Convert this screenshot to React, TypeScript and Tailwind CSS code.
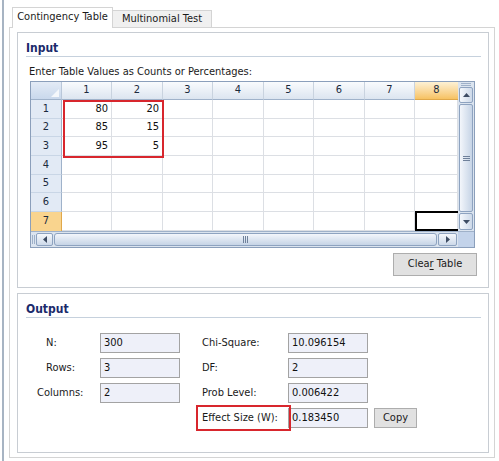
import React from "react";

const COLS = [50, 51, 50, 51, 50, 51, 50, 43];
const ROWS = [19, 18, 19, 19, 18, 19, 19];
const DATA: Record<string, string> = {
  "0-0": "80",
  "0-1": "20",
  "1-0": "85",
  "1-1": "15",
  "2-0": "95",
  "2-1": "5",
};

function Arrow({ dir }: { dir: "up" | "down" | "left" | "right" }) {
  const d = {
    up: "M0 4L3.5 0L7 4Z",
    down: "M0 0L7 0L3.5 4Z",
    left: "M4 0L4 7L0 3.5Z",
    right: "M0 0L4 3.5L0 7Z",
  }[dir];
  const vertical = dir === "up" || dir === "down";
  return (
    <svg width={vertical ? 7 : 4} height={vertical ? 4 : 7} viewBox={vertical ? "0 0 7 4" : "0 0 4 7"}>
      <path d={d} fill="#3d4c63" />
    </svg>
  );
}

function VScroll() {
  return (
    <div className="flex w-[16px] flex-col bg-[#dbe4ef] px-[1px]">
      <div className="mx-[2px] mt-[1px] h-[3px] border-y border-[#9fb1c9]" />
      <div className="mt-[1px] flex h-[16px] items-center justify-center rounded-[2px] border border-[#8ea3c0] bg-linear-to-r from-[#f5f8fc] to-[#cdd9e9]">
        <Arrow dir="up" />
      </div>
      <div className="my-[1px] flex flex-1 items-center justify-center rounded-[2px] border border-[#8ea3c0] bg-linear-to-r from-[#f3f6fb] to-[#c6d4e6]">
        <div className="flex w-[7px] flex-col gap-[1px]">
          <div className="h-px bg-[#6f819b]" />
          <div className="h-px bg-[#6f819b]" />
          <div className="h-px bg-[#6f819b]" />
        </div>
      </div>
      <div className="mb-[1px] flex h-[17px] items-center justify-center rounded-[2px] border border-[#8ea3c0] bg-linear-to-r from-[#f5f8fc] to-[#cdd9e9]">
        <Arrow dir="down" />
      </div>
    </div>
  );
}

function HScroll() {
  return (
    <div className="flex h-[15px] w-[427px] items-stretch bg-[#dbe4ef] py-[1px]">
      <div className="my-[2px] ml-[1px] w-[3px] border-x border-[#9fb1c9]" />
      <div className="ml-[1px] flex w-[17px] items-center justify-center rounded-[2px] border border-[#8ea3c0] bg-linear-to-b from-[#f5f8fc] to-[#cdd9e9]">
        <Arrow dir="left" />
      </div>
      <div className="mx-[1px] flex flex-1 items-center justify-center rounded-[3px] border border-[#8ea3c0] bg-linear-to-b from-[#f3f6fb] to-[#c6d4e6]">
        <div className="flex h-[7px] gap-[1px]">
          <div className="w-px bg-[#6f819b]" />
          <div className="w-px bg-[#6f819b]" />
          <div className="w-px bg-[#6f819b]" />
        </div>
      </div>
      <div className="mr-[1px] flex w-[19px] items-center justify-center rounded-[2px] border border-[#8ea3c0] bg-linear-to-b from-[#f5f8fc] to-[#cdd9e9]">
        <Arrow dir="right" />
      </div>
    </div>
  );
}

function Grid() {
  return (
    <div className="ml-[12px] mt-[2px] w-[445px] border border-[#8b9fbb]">
      <div className="flex">
        <div className="relative w-[427px]">
          <div className="flex h-[18px]">
            <div className="relative w-[31px] border-r border-b border-r-[#b9c7d9] border-b-[#9fb2ca] bg-linear-to-b from-[#e3ebf6] to-[#c9d8ec]">
              <svg className="absolute bottom-[2px] right-[2px]" width="8" height="8" viewBox="0 0 8 8">
                <path d="M8 0L8 8L0 8Z" fill="#f4f7fb" />
              </svg>
            </div>
            {COLS.map((w, i) => (
              <div
                key={i}
                style={{ width: w }}
                className={
                  i === 7
                    ? "flex items-center justify-center border-b border-b-[#e0a84a] bg-linear-to-b from-[#fdf1d4] to-[#f6c261] text-[#1b2a3d]"
                    : "flex items-center justify-center border-r border-b border-r-[#c9d3df] border-b-[#9fb2ca] bg-linear-to-b from-[#f9fbfd] to-[#dce5f0] text-[#1b2a3d]"
                }
              >
                {i + 1}
              </div>
            ))}
          </div>
          {ROWS.map((h, r) => (
            <div key={r} className="flex" style={{ height: h }}>
              <div
                className={
                  r === 6
                    ? "flex w-[31px] items-center justify-center border-r border-r-[#e0a84a] bg-[#f9d48e] text-[#1b2a3d]"
                    : "flex w-[31px] items-center justify-center border-r border-b border-r-[#9fb2ca] border-b-[#c9d6e6] bg-[#e2eaf5] text-[#1b2a3d]"
                }
              >
                {r + 1}
              </div>
              {COLS.map((w, c) => (
                <div
                  key={c}
                  style={{ width: w }}
                  className="flex items-center justify-end border-r border-b border-[#dcdfe4] bg-white pr-[3px] text-[#111]"
                >
                  {DATA[`${r}-${c}`]}
                </div>
              ))}
            </div>
          ))}
          <div className="absolute left-[32px] top-[18px] h-[58px] w-[101px] border-2 border-[#d8262d]" />
          <div className="absolute left-[384px] top-[129px] h-[20px] w-[43px] border-2 border-r-0 border-black" />
        </div>
        <VScroll />
      </div>
      <div className="flex border-t border-[#9fb1c9]">
        <HScroll />
        <div className="w-[16px] bg-[#c3d3ea]" />
      </div>
    </div>
  );
}

function Field({ value }: { value: string }) {
  return (
    <div className="flex h-[20px] w-[80px] items-center border border-[#a3a3a3] bg-[#eef0f9] pl-[3px] text-[#111]">
      {value}
    </div>
  );
}

function GroupTitle({ children }: { children: React.ReactNode }) {
  return (
    <div className="ml-[8px] mr-[7px] border-b border-[#c6d1dd] pt-[8px]">
      <div className="text-[12px] font-bold leading-[15px] text-[#1b2a6b]">{children}</div>
    </div>
  );
}

export default function App() {
  return (
    <div className="h-[461px] w-[499px] overflow-hidden bg-white font-['DejaVu_Sans_Condensed','DejaVu_Sans',sans-serif] text-[11px] text-[#1a1a1a]">
      <div className="flex h-full">
        <div className="ml-[2px] w-[2px] bg-[#a7b4c3]" />
        <div className="ml-[5px] flex flex-col pt-[7px]">
          <div className="flex h-[21px] items-start pl-[3px]">
            <div className="relative z-10 flex h-[21px] w-[101px] items-start justify-center border border-b-0 border-[#d4d4d4] bg-white pt-[2px] leading-[14px]">
              Contingency Table
            </div>
            <div className="mt-[3px] flex h-[17px] w-[99px] items-start justify-center border border-l-0 border-b-0 border-[#d4d4d4] bg-[#f0f0f0] pt-[1px] leading-[14px]">
              Multinomial Test
            </div>
          </div>
          <div className="-mt-px h-[431px] w-[486px] border border-[#d4d4d4] bg-white pl-[7px] pt-[4px]">
            <div className="flex h-[256px] w-[472px] flex-col border border-[#c8cdd3]">
              <GroupTitle>Input</GroupTitle>
              <div className="ml-[11px] mt-[8px] leading-[14px]">Enter Table Values as Counts or Percentages:</div>
              <Grid />
              <div className="mr-[11px] mt-[5px] flex justify-end">
                <button className="flex h-[23px] w-[84px] items-center justify-center border border-[#adadad] bg-[#e1e1e1] text-[#1a1a1a]">
                  Clea<span className="underline underline-offset-2">r</span>&nbsp;Table
                </button>
              </div>
            </div>
            <div className="mt-[5px] flex h-[160px] w-[472px] flex-col border border-[#c8cdd3]">
              <GroupTitle>Output</GroupTitle>
              <div className="ml-[19px] mt-[15px] flex">
                <div className="flex flex-col gap-[5px]">
                  <div className="flex items-center">
                    <span className="w-[63px] pl-[9px]">N:</span>
                    <Field value="300" />
                  </div>
                  <div className="flex items-center">
                    <span className="w-[63px] pl-[9px]">Rows:</span>
                    <Field value="3" />
                  </div>
                  <div className="flex items-center">
                    <span className="w-[63px]">Columns:</span>
                    <Field value="2" />
                  </div>
                </div>
                <div className="ml-[22px] flex flex-col gap-[5px]">
                  <div className="flex items-center">
                    <span className="w-[86px]">Chi-Square:</span>
                    <Field value="10.096154" />
                  </div>
                  <div className="flex items-center">
                    <span className="w-[86px]">DF:</span>
                    <Field value="2" />
                  </div>
                  <div className="flex items-center">
                    <span className="w-[86px]">Prob Level:</span>
                    <Field value="0.006422" />
                  </div>
                  <div className="flex items-center">
                    <span className="relative w-[86px]">
                      Effect Size (W):
                      <span className="absolute -bottom-[5px] -left-[6px] -right-[3px] -top-[5px] border-2 border-[#d8262d]" />
                    </span>
                    <Field value="0.183450" />
                    <button className="ml-[6px] flex h-[20px] w-[43px] items-center justify-center border border-[#adadad] bg-[#e1e1e1]">
                      Copy
                    </button>
                  </div>
                </div>
              </div>
            </div>
          </div>
        </div>
      </div>
    </div>
  );
}
